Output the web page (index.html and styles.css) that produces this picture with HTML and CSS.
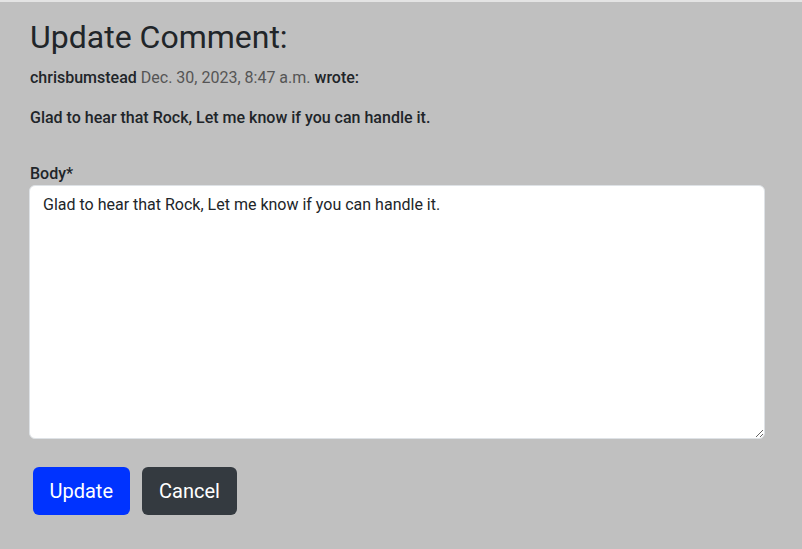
FILE: index.html
```html
<!DOCTYPE html>
<html>
<head>
<meta charset="utf-8">
<link rel="stylesheet" href="styles.css">
</head>
<body>
<div class="topline"></div>
<main class="page">
  <h1 class="title">Update Comment:</h1>
  <p class="meta"><span class="author">chrisbumstead</span> <span class="date">Dec. 30, 2023, 8:47 a.m.</span> wrote:</p>
  <p class="quote">Glad to hear that Rock, Let me know if you can handle it.</p>
  <form class="form">
    <label class="label" for="body">Body*</label>
    <textarea id="body" class="body-input">Glad to hear that Rock, Let me know if you can handle it.</textarea>
    <div class="actions">
      <button type="button" class="btn btn-primary">Update</button>
      <button type="button" class="btn btn-dark">Cancel</button>
    </div>
  </form>
</main>
</body>
</html>
```
FILE: styles.css
```css
html, body {
  margin: 0;
  padding: 0;
  background: #c0c0c0;
  font-family: Roboto, "Liberation Sans", sans-serif;
  color: #212529;
}
.topline {
  height: 2px;
  background: #e4e4e4;
}
.page {
  padding: 16px 37px 0 29px;
}
.title {
  margin: 0 0 0 1px;
  font-size: 32px;
  font-weight: 400;
  line-height: 1.2;
}
.meta {
  margin: 10px 0 0 1px;
  font-size: 16px;
  font-weight: 500;
  line-height: 24px;
}
.date {
  color: #555;
  font-weight: 400;
}
.quote {
  margin: 16px 0 0 1px;
  font-size: 16px;
  font-weight: 500;
  line-height: 24px;
}
.form {
  margin-top: 32px;
  display: flex;
  flex-direction: column;
}
.label {
  font-size: 16px;
  font-weight: 500;
  line-height: 24px;
  margin-left: 1px;
}
.body-input {
  box-sizing: border-box;
  width: 736px;
  height: 254px;
  margin-top: -1px;
  padding: 7px 13px 6px;
  border: 1px solid #dee2e6;
  border-radius: 6px;
  background: #fff;
  font-family: Roboto, "Liberation Sans", sans-serif;
  font-size: 16px;
  line-height: 24px;
  color: #212529;
}
.actions {
  display: flex;
  gap: 12px;
  margin-top: 28px;
  padding-left: 4px;
}
.btn {
  height: 48px;
  border: 0;
  border-radius: 6px;
  font-family: Roboto, "Liberation Sans", sans-serif;
  font-size: 20px;
  color: #fff;
}
.btn-primary {
  background: #0033ff;
  padding: 0 16.5px;
}
.btn-dark {
  background: #343a40;
  padding: 0 17.5px;
}
```
